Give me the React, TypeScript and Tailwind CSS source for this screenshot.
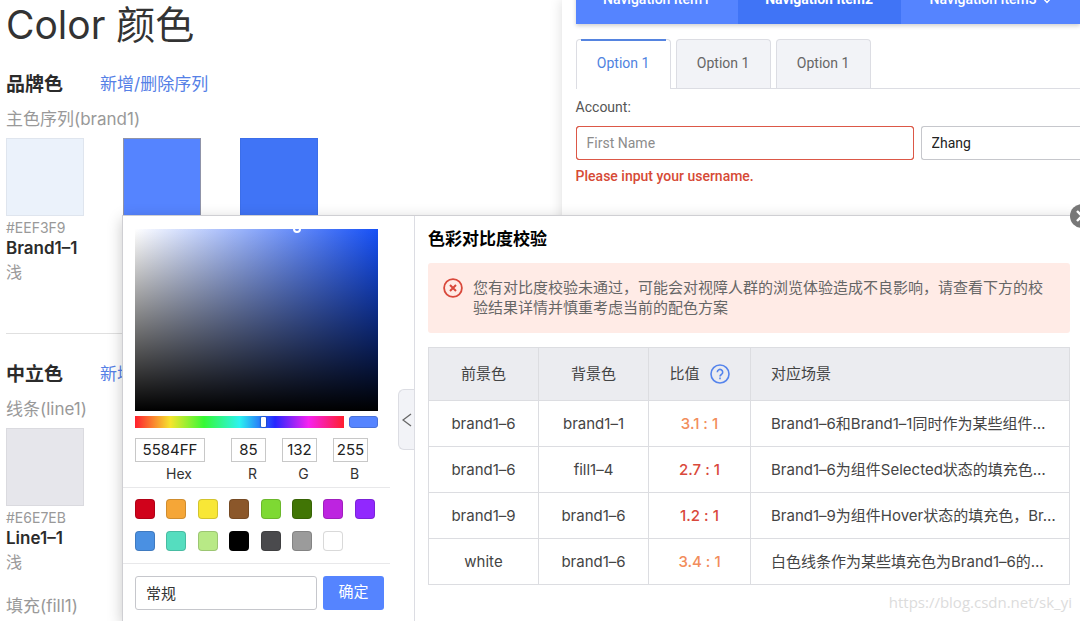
import { useState } from 'react'

type Swatch = { color: string; selected?: boolean }

type ContrastRow = {
  fg: string
  bg: string
  ratio: string
  level: 'warn' | 'fail'
  scene: string
}

const brandSwatches: Swatch[] = [
  { color: '#EBF2FB' },
  { color: '#5584FF', selected: true },
  { color: '#4074F6' },
]

const presets = [
  '#D0021B', '#F5A637', '#F8E736', '#8B572A', '#7ED933', '#417505', '#BD24E0', '#9128FE',
  '#4A90E2', '#55DDBF', '#B8E986', '#000000', '#4A4A4D', '#9B9B9B', '#FFFFFF',
]

const rows: ContrastRow[] = [
  { fg: 'brand1–6', bg: 'brand1–1', ratio: '3.1 : 1', level: 'warn', scene: 'Brand1–6和Brand1–1同时作为某些组件…' },
  { fg: 'brand1–6', bg: 'fill1–4', ratio: '2.7 : 1', level: 'fail', scene: 'Brand1–6为组件Selected状态的填充色…' },
  { fg: 'brand1–9', bg: 'brand1–6', ratio: '1.2 : 1', level: 'fail', scene: 'Brand1–9为组件Hover状态的填充色，Br…' },
  { fg: 'white', bg: 'brand1–6', ratio: '3.4 : 1', level: 'warn', scene: '白色线条作为某些填充色为Brand1–6的…' },
]

function SectionTitle({ title }: { title: string }) {
  return (
    <div className="flex h-7 items-center">
      <h2 className="w-[94px] text-[19px] font-bold text-[#2b2b2b]">{title}</h2>
      <a href="#series" className="whitespace-nowrap text-[17px] text-[#5580e6]">新增/删除序列</a>
    </div>
  )
}

function SwatchInfo({ hex, name }: { hex: string; name: string }) {
  return (
    <div className="mt-0.5">
      <p className="text-sm leading-5 text-[#999]">{hex}</p>
      <p className="text-[17px] leading-5 font-semibold text-[#2b2b2b]">{name}</p>
      <p className="text-base leading-7 text-[#999]">浅</p>
    </div>
  )
}

function PaletteColumn() {
  return (
    <main className="w-[52%] shrink-0 pt-px pl-1.5">
      <h1 className="text-[39px] leading-[48px] text-[#333]">Color 颜色</h1>
      <section className="mt-[22px]">
        <SectionTitle title="品牌色" />
        <p className="mt-2 text-[17px] leading-6 text-[#999]">主色序列(brand1)</p>
        <div className="mt-[7px] flex gap-[39px]">
          {brandSwatches.map(s => (
            <button
              key={s.color}
              aria-label={s.color}
              className={s.selected ? 'size-[78px] border border-[#8f93a8]' : 'size-[78px] border border-black/5'}
              style={{ backgroundColor: s.color }}
            />
          ))}
        </div>
        <SwatchInfo hex="#EEF3F9" name="Brand1–1" />
      </section>
      <section className="mt-[47px] border-t border-[#e0e0e0] pt-[27px]">
        <SectionTitle title="中立色" />
        <p className="mt-2 text-[17px] leading-6 text-[#999]">线条(line1)</p>
        <button aria-label="#E6E7EB" className="mt-[7px] block size-[78px] border border-black/5 bg-[#e6e6eb]" />
        <SwatchInfo hex="#E6E7EB" name="Line1–1" />
        <p className="mt-[18px] text-[17px] leading-6 text-[#999]">填充(fill1)</p>
      </section>
    </main>
  )
}

function Preview() {
  const [tab, setTab] = useState(0)

  return (
    <aside className="min-w-0 flex-1 pl-3.5 font-[Roboto,'Noto_Sans_CJK_SC',sans-serif] shadow-[0_0_12px_rgba(0,0,0,0.14)]">
      <nav className="-mt-[26px] flex h-[50px] overflow-hidden bg-[#5584ff] text-sm font-medium whitespace-nowrap text-white shadow-[0_2px_4px_rgba(0,0,0,0.18)]">
        <a href="#item1" className="flex w-[162px] shrink-0 items-center justify-center">Navigation Item1</a>
        <a href="#item2" className="flex w-[163px] shrink-0 items-center justify-center bg-[#4074f6] font-bold">Navigation Item2</a>
        <a href="#item3" className="flex shrink-0 items-center gap-1 pl-[29px]">
          Navigation Item3
          <svg viewBox="0 0 12 12" className="size-3" fill="none" stroke="currentColor" strokeWidth="1.4">
            <path d="m1.500 4.500 4.500 5 4.500-5-1.500-2" />
          </svg>
        </a>
      </nav>
      <div className="mt-[15px] flex gap-[5px] border-b border-[#dcdde3] text-sm" role="tablist">
        {[0, 1, 2].map(i => (
          <button
            key={i}
            role="tab"
            aria-selected={tab === i}
            onClick={() => setTab(i)}
            className={
              tab === i
                ? 'relative -mb-px h-[50px] w-[95px] rounded-t border border-b-0 border-[#dcdde3] bg-white pb-[3px] text-[#4f83e0]'
                : 'relative h-[49px] w-[95px] rounded-t border border-b-0 border-[#dcdde3] bg-[#f2f3f7] pb-0.5 text-[#666]'
            }
          >
            {tab === i && <span className="absolute inset-x-1 -top-px h-0.5 bg-[#5584e0]" />}
            Option 1
          </button>
        ))}
      </div>
      <div className="mt-2 text-sm">
        <label htmlFor="first-name" className="block leading-5 text-[#555]">Account:</label>
        <div className="mt-[9px] flex gap-[7px]">
          <input
            id="first-name"
            placeholder="First Name"
            className="h-[34px] w-[338px] shrink-0 rounded-[3px] border border-[#dc5847] px-2.5 outline-1 -outline-offset-1 outline-[#dc5847] placeholder:text-[#8c8c8c]"
          />
          <input
            aria-label="Last name"
            defaultValue="Zhang"
            className="h-[34px] min-w-0 flex-1 rounded-l-[3px] border border-r-0 border-[#c6c7cc] px-2.5 text-[#222]"
          />
        </div>
        <p className="mt-1.5 leading-5 font-medium text-[#d64a36]">Please input your username.</p>
      </div>
    </aside>
  )
}

function Channel({ id, label, value, wide }: { id: string; label: string; value: string; wide?: boolean }) {
  return (
    <div className={wide ? 'w-[70px]' : 'w-[35px]'}>
      <input
        id={id}
        defaultValue={value}
        className="h-6 w-full border border-[#c8c8c8] text-center text-[15px] text-[#222]"
      />
      <label htmlFor={id} className={wide ? 'block pl-[18px] text-center text-sm leading-6 text-[#333]' : 'block pl-2 text-center text-sm leading-6 text-[#333]'}>
        {label}
      </label>
    </div>
  )
}

function ColorPicker() {
  const [hue, setHue] = useState(223)

  return (
    <div className="relative w-[292px] shrink-0 border-r border-[#dcdde3] pt-[13px]">
      <div className="relative mx-3 h-[182px] w-[243px] overflow-hidden bg-[linear-gradient(to_top,#000,transparent),linear-gradient(to_right,#fff,#1650f6)]">
        <span className="absolute -top-1 left-2/3 size-2 -translate-x-1/2 rounded-full border-2 border-white" />
      </div>
      <div className="mx-3 mt-[5px] flex h-3 w-[243px] gap-[5px]">
        <input
          type="range"
          aria-label="Hue"
          min={0}
          max={360}
          value={hue}
          onChange={e => setHue(Number(e.target.value))}
          className="h-3 min-w-0 flex-1 appearance-none bg-[linear-gradient(to_right,#ff1f2e,#f5e52e_17%,#36f936_33%,#2cf3f0_50%,#2626ff_67%,#f622f0_83%,#ff1f2e)] [&::-webkit-slider-thumb]:h-2.5 [&::-webkit-slider-thumb]:w-[5px] [&::-webkit-slider-thumb]:appearance-none [&::-webkit-slider-thumb]:rounded-[1px] [&::-webkit-slider-thumb]:bg-white [&::-webkit-slider-thumb]:shadow-[0_0_2px_rgba(0,0,0,0.6)]"
        />
        <span className="w-[29px] rounded-[3px] border border-[#4a72d8] bg-[#5584ff]" />
      </div>
      <div className="ml-3 mt-[9px] flex gap-4">
        <div className="mr-2.5">
          <Channel id="hex" label="Hex" value="5584FF" wide />
        </div>
        <Channel id="red" label="R" value="85" />
        <Channel id="green" label="G" value="132" />
        <Channel id="blue" label="B" value="255" />
      </div>
      <div className="mr-6 mt-px grid grid-cols-8 gap-y-3 border-y border-[#e8e8ea] pt-[11px] pr-1 pb-3 pl-3">
        {presets.map(c => (
          <button key={c} aria-label={c} className="size-5 rounded-[4px] border border-black/15" style={{ backgroundColor: c }} />
        ))}
      </div>
      <div className="mt-3 ml-3 flex gap-1.5 text-[15px]">
        <input aria-label="名称" defaultValue="常规" className="h-[34px] w-[182px] rounded-[3px] border border-[#c6c7cc] px-2.5 text-[#333]" />
        <button className="h-[34px] w-[61px] rounded-[3px] bg-[#5584ff] text-white">确定</button>
      </div>
      <button aria-label="收起" className="absolute top-[173px] right-0 flex h-[61px] w-4 items-center justify-center rounded-l-md border border-r-0 border-[#dcdde3] bg-[#f2f3f7] text-[#666]">
        <svg viewBox="0 0 10 14" className="h-3.5 w-2.5 shrink-0" fill="none" stroke="currentColor" strokeWidth="1.3">
          <path d="M9 1 1 7l8 6" />
        </svg>
      </button>
    </div>
  )
}

function ContrastCheck() {
  return (
    <div className="min-w-0 flex-1 pt-[11px] pr-2.5 pl-[13px]">
      <h2 className="text-[17px] leading-6 font-bold text-black">色彩对比度校验</h2>
      <div role="alert" className="mt-3 flex h-[70px] gap-2.5 rounded-[3px] bg-[#ffebe6] pt-[15px] pl-[15px]">
        <svg viewBox="0 0 20 20" className="size-5 shrink-0" fill="none" stroke="#d9483b">
          <circle cx="10" cy="10" r="8.9" strokeWidth="1.8" />
          <path d="m7 7 6 6m0-6-6 6" strokeWidth="2" />
        </svg>
        <p className="pr-6 text-[15px] leading-5 text-[#666]">
          您有对比度校验未通过，可能会对视障人群的浏览体验造成不良影响，请查看下方的校验结果详情并慎重考虑当前的配色方案
        </p>
      </div>
      <table className="mt-3.5 w-full table-fixed border-collapse text-center text-[15px] text-[#444]">
        <thead>
          <tr className="h-[53px] bg-[#ebecf0]">
            <th className="w-[110px] border border-[#dcdde1] font-normal">前景色</th>
            <th className="w-[110px] border border-[#dcdde1] font-normal">背景色</th>
            <th className="w-[102px] border border-[#dcdde1] font-normal">
              <span className="flex items-center justify-center gap-2.5">
                比值
                <svg viewBox="0 0 20 20" className="size-5" fill="none" stroke="#5584ec" strokeWidth="1.6">
                  <circle cx="10" cy="10" r="9" />
                  <path d="M7.3 8.2a2.7 2.7 0 1 1 4.2 2.2c-1 .7-1.5 1-1.5 2" />
                  <path d="M10 13.6v1.6" />
                </svg>
              </span>
            </th>
            <th className="border border-[#dcdde1] pl-5 text-left font-normal">对应场景</th>
          </tr>
        </thead>
        <tbody className="[font-feature-settings:'calt'_0]">
          {rows.map((r, i) => (
            <tr key={i} className="h-[46px]">
              <td className="border border-[#dcdde1] pt-0.5">{r.fg}</td>
              <td className="border border-[#dcdde1] pt-0.5">{r.bg}</td>
              <td className={r.level === 'fail' ? 'border border-[#dcdde1] pt-0.5 font-medium text-[#d9483b]' : 'border border-[#dcdde1] pt-0.5 font-medium text-[#f28d5c]'}>
                {r.ratio}
              </td>
              <td className="truncate border border-[#dcdde1] pt-0.5 pl-5 text-left">{r.scene}</td>
            </tr>
          ))}
        </tbody>
      </table>
    </div>
  )
}

export default function App() {
  return (
    <div className="relative min-h-screen overflow-hidden bg-white font-[Inter,'Noto_Sans_CJK_SC',sans-serif]">
      <div className="flex min-h-screen">
        <PaletteColumn />
        <Preview />
      </div>
      {/* color editor popup */}
      <div role="dialog" aria-label="色彩对比度校验" className="absolute top-[215px] right-0 bottom-0 left-[122px] flex border-t border-l border-[#cfcfd3] bg-white shadow-[0_4px_14px_rgba(0,0,0,0.22)]">
        <ColorPicker />
        <ContrastCheck />
        <button aria-label="关闭" className="absolute -top-3 -right-3.5 flex size-6 items-center justify-center rounded-full bg-[#777] text-white">
          <svg viewBox="0 0 12 12" className="size-3" fill="none" stroke="currentColor" strokeWidth="2.4">
            <path d="m1 1 10 10M11 1 1 11" />
          </svg>
        </button>
      </div>
      <span className="absolute right-2 bottom-2 font-['Open_Sans',sans-serif] text-[15px] text-[#dcdcdc]">https://blog.csdn.net/sk_yi</span>
    </div>
  )
}
